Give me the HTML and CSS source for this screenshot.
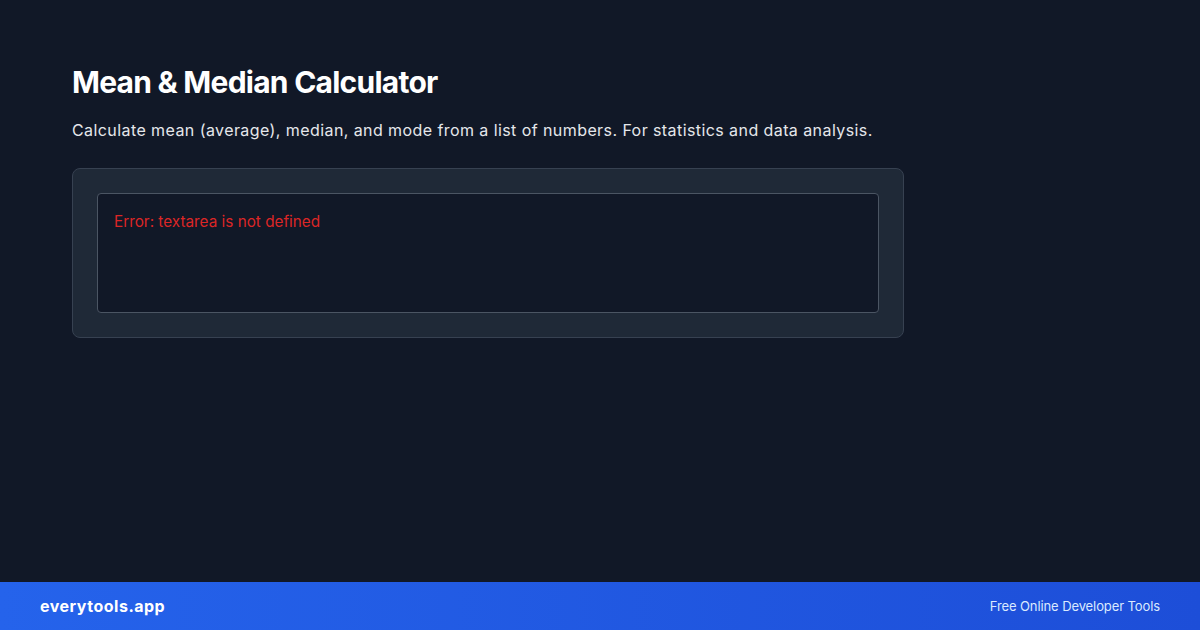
FILE: index.html
```html
<!DOCTYPE html>
<html lang="en">
<head>
    <meta charset="UTF-8">
    <meta name="viewport" content="width=device-width, initial-scale=1.0">
    <title>Mean &amp; Median Calculator</title>
    <link rel="stylesheet" href="styles.css">
</head>
<body>
    <div class="page">
        <main class="content">
            <h1>Mean &amp; Median Calculator</h1>
            <p class="subtitle">Calculate mean (average), median, and mode from a list of numbers. For statistics and data analysis.</p>
            <div class="tool-card">
                <div class="output">
                    <div class="error">Error: textarea is not defined</div>
                </div>
            </div>
        </main>
        <footer class="footer">
            <div class="brand">everytools.app</div>
            <div class="tagline">Free Online Developer Tools</div>
        </footer>
    </div>
</body>
</html>
```

FILE: styles.css
```css
* {
    box-sizing: border-box;
}
body {
    font-family: Inter, "Noto Sans", sans-serif;
    background-color: #111827;
    color: #fff;
    margin: 0;
}
.page {
    width: 1200px;
    height: 630px;
    display: flex;
    flex-direction: column;
}
.content {
    flex: 1;
    padding: 64px 72px 0;
}
h1 {
    font-size: 30px;
    line-height: 36px;
    font-weight: 700;
    letter-spacing: -0.75px;
    margin: 0 0 18px;
}
.subtitle {
    font-size: 16px;
    line-height: 24px;
    letter-spacing: 0.42px;
    color: #e5e7eb;
    margin: 0 0 26px;
}
.tool-card {
    width: 832px;
    background-color: #1f2937;
    border: 1px solid #374151;
    border-radius: 8px;
    padding: 24px;
}
.output {
    height: 120px;
    background-color: #111827;
    border: 1px solid #4b5563;
    border-radius: 4px;
    padding: 16px;
}
.error {
    color: #dc2626;
    font-size: 15.3px;
    line-height: 24px;
}
.footer {
    height: 48px;
    display: flex;
    align-items: center;
    justify-content: space-between;
    padding: 0 40px;
    background: linear-gradient(90deg, #2563eb, #1d4ed8);
}
.brand {
    font-size: 16px;
    font-weight: 700;
    letter-spacing: 0.5px;
}
.tagline {
    font-size: 13px;
    letter-spacing: -0.1px;
    color: #dbeafe;
}
```
